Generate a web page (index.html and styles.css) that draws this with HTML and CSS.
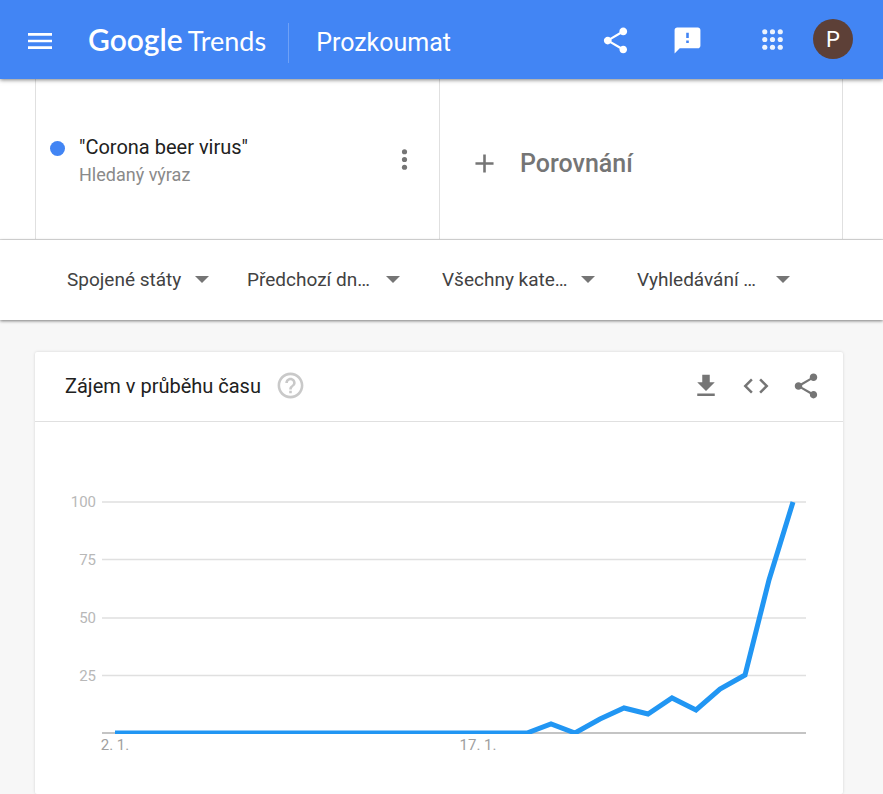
FILE: index.html
```
<!DOCTYPE html>
<html lang="cs">
<head>
    <meta charset="UTF-8" />
    <meta name="viewport" content="width=device-width, initial-scale=1.0" />
    <title>Prozkoumat - Google Trends</title>
    <link rel="stylesheet" href="styles.css">
</head>
<body>
    <header>
        <button class="icon-btn menu-btn" aria-label="Menu">
            <svg class="icon" viewBox="0 0 24 24"><path d="M3 18h18v-2H3v2zm0-5h18v-2H3v2zm0-7v2h18V6H3z"/></svg>
        </button>
        <a class="logo" href="#"><span class="logo-google">Google</span><span class="logo-trends">Trends</span></a>
        <h1>Prozkoumat</h1>
        <div class="header-actions">
            <button class="icon-btn" aria-label="Sdílet">
                <svg class="icon" viewBox="0 0 24 24"><path d="M18 16.08c-.76 0-1.44.3-1.96.77L8.91 12.7c.05-.23.09-.46.09-.7s-.04-.47-.09-.7l7.05-4.11c.54.5 1.25.81 2.04.81 1.66 0 3-1.34 3-3s-1.34-3-3-3-3 1.34-3 3c0 .24.04.47.09.7L8.04 9.81C7.5 9.31 6.79 9 6 9c-1.66 0-3 1.34-3 3s1.34 3 3 3c.79 0 1.5-.31 2.04-.81l7.12 4.16c-.05.21-.08.43-.08.65 0 1.61 1.31 2.92 2.92 2.92s2.92-1.31 2.92-2.92-1.31-2.92-2.92-2.92z"/></svg>
            </button>
            <button class="icon-btn" aria-label="Odeslat zpětnou vazbu">
                <svg class="icon" viewBox="0 0 24 24"><path d="M20 2H4c-1.1 0-2 .9-2 2v18l4-4h14c1.1 0 2-.9 2-2V4c0-1.100-.9-2-2-2zm-7 12h-2v-2h2v2zm0-4h-2V6h2v4z"/></svg>
            </button>
        </div>
        <div class="header-account">
            <button class="icon-btn apps-btn" aria-label="Aplikace Google">
                <svg class="icon" viewBox="0 0 24 24"><circle cx="6" cy="6" r="2"/><circle cx="12" cy="6" r="2"/><circle cx="18" cy="6" r="2"/><circle cx="6" cy="12" r="2"/><circle cx="12" cy="12" r="2"/><circle cx="18" cy="12" r="2"/><circle cx="6" cy="18" r="2"/><circle cx="12" cy="18" r="2"/><circle cx="18" cy="18" r="2"/></svg>
            </button>
            <button class="avatar" aria-label="Účet Google">P</button>
        </div>
    </header>

    <section class="terms">
        <div class="term">
            <span class="term-dot"></span>
            <div class="term-text">
                <div class="term-name">"Corona beer virus"</div>
                <div class="term-type">Hledaný výraz</div>
            </div>
            <button class="icon-btn" aria-label="Další možnosti">
                <svg class="icon" viewBox="0 0 24 24"><circle cx="12" cy="6" r="2"/><circle cx="12" cy="12" r="2"/><circle cx="12" cy="18" r="2"/></svg>
            </button>
        </div>
        <button class="compare">
            <svg class="icon" viewBox="0 0 24 24"><path d="M19 13h-6v6h-2v-6H5v-2h6V5h2v6h6v2z"/></svg>
            <span>Porovnání</span>
        </button>
    </section>

    <section class="filters">
        <div class="filter filter-geo">
            <select aria-label="Oblast"><option>Spojené státy</option></select>
        </div>
        <div class="filter">
            <select aria-label="Období"><option>Předchozí dn…</option></select>
        </div>
        <div class="filter">
            <select aria-label="Kategorie"><option>Všechny kate…</option></select>
        </div>
        <div class="filter">
            <select aria-label="Typ vyhledávání"><option>Vyhledávání …</option></select>
        </div>
    </section>

    <main>
        <section class="card">
            <div class="card-header">
                <h2>Zájem v průběhu času</h2>
                <button class="icon-btn help-btn" aria-label="Nápověda">
                    <svg class="icon" viewBox="0 0 24 24"><path d="M11 18h2v-2h-2v2zm1-16C6.480 2 2 6.480 2 12s4.480 10 10 10 10-4.480 10-10S17.520 2 12 2zm0 18c-4.410 0-8-3.590-8-8s3.590-8 8-8 8 3.590 8 8-3.590 8-8 8zm0-14c-2.210 0-4 1.790-4 4h2c0-1.100.9-2 2-2s2 .9 2 2c0 2-3 1.750-3 5h2c0-2.250 3-2.500 3-5 0-2.210-1.790-4-4-4z"/></svg>
                </button>
                <div class="card-actions">
                    <button class="icon-btn" aria-label="Stáhnout CSV">
                        <svg class="icon" viewBox="0 0 24 24"><path d="M19 9h-4V3H9v6H5l7 7 7-7zM5 18v2h14v-2H5z"/></svg>
                    </button>
                    <button class="icon-btn" aria-label="Vložit">
                        <svg class="icon" viewBox="0 0 24 24"><path d="M9.400 16.600L4.800 12l4.600-4.600L8 6l-6 6 6 6 1.400-1.400zm5.200 0l4.600-4.600-4.600-4.600L16 6l6 6-6 6-1.400-1.400z"/></svg>
                    </button>
                    <button class="icon-btn" aria-label="Sdílet graf">
                        <svg class="icon" viewBox="0 0 24 24"><path d="M18 16.08c-.76 0-1.44.3-1.96.77L8.91 12.7c.05-.23.09-.46.09-.7s-.04-.47-.09-.7l7.05-4.11c.54.5 1.25.81 2.04.81 1.66 0 3-1.34 3-3s-1.34-3-3-3-3 1.34-3 3c0 .24.04.47.09.7L8.04 9.81C7.5 9.31 6.79 9 6 9c-1.66 0-3 1.34-3 3s1.34 3 3 3c.79 0 1.5-.31 2.04-.81l7.12 4.16c-.05.21-.08.43-.08.65 0 1.61 1.31 2.92 2.92 2.92s2.92-1.31 2.92-2.92-1.31-2.92-2.92-2.92z"/></svg>
                    </button>
                </div>
            </div>
            <svg class="chart" viewBox="0 0 808 372" role="img" aria-label="Zájem v průběhu času">
                <clipPath id="plot"><rect x="80" y="79" width="691" height="233"/></clipPath>
                <g class="grid">
                    <path d="M67 80h704M67 137.500h704M67 196h704M67 253.500h704"/>
                    <path class="baseline" d="M67 311h704"/>
                </g>
                <!-- one point per day, 2. 1. - 30. 1. -->
                <polyline class="line" clip-path="url(#plot)" points="80,311 492,311 516,302 540,311 565,297 589,286 613,292 637,276 661,288 685,267 710,253 734,158 758,80"/>
                <g class="y-labels">
                    <text x="61" y="85">100</text>
                    <text x="61" y="143">75</text>
                    <text x="61" y="201">50</text>
                    <text x="61" y="259">25</text>
                </g>
                <g class="x-labels">
                    <text x="80" y="328">2. 1.</text>
                    <text x="443" y="328">17. 1.</text>
                </g>
            </svg>
        </section>
    </main>
</body>
</html>
```
FILE: styles.css
```
* {
    box-sizing: border-box;
}

body {
    font-family: Roboto, sans-serif;
    margin: 0;
    background-color: #f7f7f7;
    color: #212121;
}

button {
    font-family: inherit;
    border: none;
    background: none;
    padding: 0;
    cursor: pointer;
}

.icon {
    display: block;
    width: 31px;
    height: 31px;
    fill: currentColor;
}

.icon-btn {
    color: #757575;
    flex: none;
}

header {
    position: relative;
    display: flex;
    align-items: center;
    height: 79px;
    padding: 0 30px 0 24px;
    background-color: #4285f4;
    color: white;
    box-shadow: 0 1px 4px rgba(0, 0, 0, 0.5);
}

header .icon-btn {
    color: white;
}

.menu-btn {
    padding-top: 3px;
}

.menu-btn .icon {
    width: 32px;
    height: 32px;
}

.logo {
    display: flex;
    align-items: baseline;
    gap: 5px;
    margin-left: 32px;
    font-family: Lato, sans-serif;
    line-height: 40px;
    color: white;
    text-decoration: none;
}

.logo-google {
    font-size: 30px;
    font-weight: 600;
}

.logo-trends {
    font-size: 27px;
}

h1 {
    margin: 6px 0 0 22px;
    padding-left: 27px;
    border-left: 1px solid #6ea1f7;
    font-size: 25px;
    font-weight: 400;
    line-height: 40px;
}

.header-actions {
    display: flex;
    gap: 41px;
    margin-left: auto;
    padding-top: 2px;
}

.header-account {
    display: flex;
    align-items: center;
    gap: 25px;
    margin-left: 54px;
    padding-bottom: 1px;
}

.apps-btn {
    opacity: 0.9;
}

.avatar {
    width: 40px;
    height: 40px;
    border-radius: 50%;
    background-color: #5d4037;
    color: white;
    font-size: 22px;
}

.terms {
    display: grid;
    grid-template-columns: 1fr 1fr;
    height: 161px;
    padding: 0 40px 0 35px;
    background-color: white;
    border-bottom: 1px solid #e0e0e0;
}

.term,
.compare {
    display: flex;
    align-items: center;
    border-left: 1px solid #e0e0e0;
}

.term {
    padding: 0 19px 0 14px;
}

.term-dot {
    width: 15px;
    height: 15px;
    margin: 0 14px 22px 0;
    border-radius: 50%;
    background-color: #4285f4;
}

.term-text {
    flex: 1;
    padding-top: 4px;
    line-height: 28px;
}

.term-name {
    font-size: 20px;
}

.term-type {
    font-size: 18px;
    color: #8a8a8a;
}

.compare {
    gap: 20px;
    padding: 8px 0 0 29px;
    border-right: 1px solid #e0e0e0;
    color: #757575;
    font-size: 25px;
    font-weight: 500;
}

.filters {
    position: relative;
    display: flex;
    gap: 42px;
    padding: 19px 40px 21px 67px;
    background-color: white;
    box-shadow: 0 1px 3px rgba(0, 0, 0, 0.5);
}

.filter {
    position: relative;
    width: 153px;
}

.filter-geo {
    width: 142px;
    margin-right: -4px;
}

.filter select {
    appearance: none;
    display: block;
    width: 100%;
    height: 40px;
    padding: 0;
    border: none;
    background: none;
    font-family: inherit;
    font-size: 19px;
    color: #424242;
}

/* dropdown arrow */
.filter::after {
    content: "";
    position: absolute;
    right: 0;
    top: 17px;
    border: 7px solid transparent;
    border-top-color: #757575;
    border-bottom: none;
    pointer-events: none;
}

main {
    padding: 32px 40px 0 35px;
}

.card {
    background-color: white;
    border-radius: 2px;
    box-shadow: 0 0 3px rgba(0, 0, 0, 0.15);
}

.card-header {
    display: flex;
    align-items: center;
    height: 70px;
    padding: 0 22px 2px 30px;
    border-bottom: 1px solid #e0e0e0;
}

h2 {
    margin: 0;
    font-size: 20px;
    font-weight: 400;
}

.help-btn {
    margin-left: 14px;
    color: #c9c9c9;
}

.card-actions {
    display: flex;
    gap: 20px;
    margin-left: auto;
}

.card-actions .icon {
    width: 30px;
    height: 30px;
}

.chart {
    display: block;
    width: 100%;
}

.chart text {
    font-size: 15px;
}

.grid {
    stroke: #e0e0e0;
    stroke-width: 1.5;
}

.grid .baseline {
    stroke: #b0b0b0;
}

.line {
    fill: none;
    stroke: #2196f3;
    stroke-width: 5;
}

.y-labels {
    fill: #b8b8b8;
    text-anchor: end;
}

.x-labels {
    fill: #a0a0a0;
    text-anchor: middle;
}
```
